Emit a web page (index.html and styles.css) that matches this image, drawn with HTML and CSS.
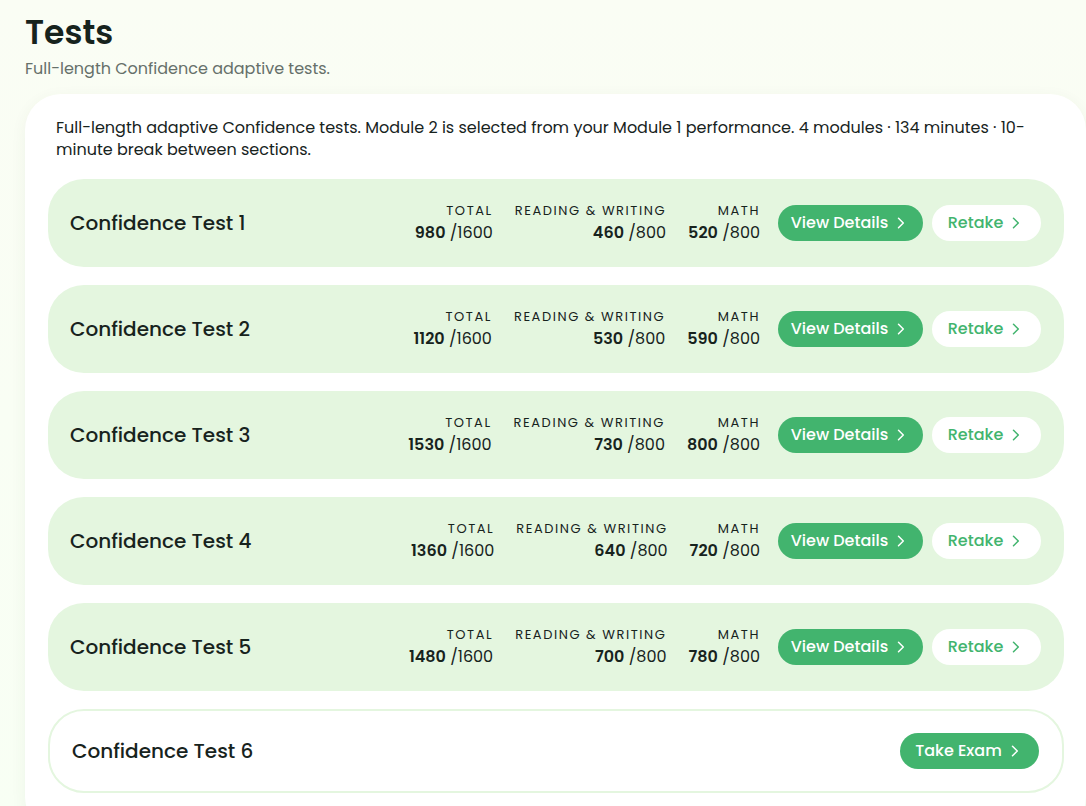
FILE: index.html
```html
<!DOCTYPE html>
<html lang="en">
<head>
<meta charset="utf-8">
<meta name="viewport" content="width=device-width, initial-scale=1">
<title>Tests</title>
<link rel="stylesheet" href="styles.css">
</head>
<body>
<svg class="sprite" aria-hidden="true"><symbol id="chevron" viewBox="0 0 8 12"><path d="M1.5 1.2 6.3 6 1.5 10.8" fill="none" stroke="currentColor" stroke-width="1.5" stroke-linecap="round" stroke-linejoin="round"/></symbol></svg>
<main class="page">
  <header class="page-header">
    <h1 class="page-title">Tests</h1>
    <p class="page-subtitle">Full-length Confidence adaptive tests.</p>
  </header>
  <section class="panel">
    <p class="intro">Full-length adaptive Confidence tests. Module 2 is selected from your Module 1 performance. 4 modules · 134 minutes · 10-minute break between sections.</p>
    <ul class="tests">
      <li class="test">
        <h2 class="test-name">Confidence Test 1</h2>
        <dl class="scores">
          <div class="score"><dt>Total</dt><dd><strong>980</strong> /1600</dd></div>
          <div class="score"><dt>Reading &amp; Writing</dt><dd><strong>460</strong> /800</dd></div>
          <div class="score"><dt>Math</dt><dd><strong>520</strong> /800</dd></div>
        </dl>
        <div class="actions">
          <button class="btn btn-details" type="button">View Details<svg class="chevron"><use href="#chevron"/></svg></button>
          <button class="btn btn-retake" type="button">Retake<svg class="chevron"><use href="#chevron"/></svg></button>
        </div>
      </li>
      <li class="test">
        <h2 class="test-name">Confidence Test 2</h2>
        <dl class="scores">
          <div class="score"><dt>Total</dt><dd><strong>1120</strong> /1600</dd></div>
          <div class="score"><dt>Reading &amp; Writing</dt><dd><strong>530</strong> /800</dd></div>
          <div class="score"><dt>Math</dt><dd><strong>590</strong> /800</dd></div>
        </dl>
        <div class="actions">
          <button class="btn btn-details" type="button">View Details<svg class="chevron"><use href="#chevron"/></svg></button>
          <button class="btn btn-retake" type="button">Retake<svg class="chevron"><use href="#chevron"/></svg></button>
        </div>
      </li>
      <li class="test">
        <h2 class="test-name">Confidence Test 3</h2>
        <dl class="scores">
          <div class="score"><dt>Total</dt><dd><strong>1530</strong> /1600</dd></div>
          <div class="score"><dt>Reading &amp; Writing</dt><dd><strong>730</strong> /800</dd></div>
          <div class="score"><dt>Math</dt><dd><strong>800</strong> /800</dd></div>
        </dl>
        <div class="actions">
          <button class="btn btn-details" type="button">View Details<svg class="chevron"><use href="#chevron"/></svg></button>
          <button class="btn btn-retake" type="button">Retake<svg class="chevron"><use href="#chevron"/></svg></button>
        </div>
      </li>
      <li class="test">
        <h2 class="test-name">Confidence Test 4</h2>
        <dl class="scores">
          <div class="score"><dt>Total</dt><dd><strong>1360</strong> /1600</dd></div>
          <div class="score"><dt>Reading &amp; Writing</dt><dd><strong>640</strong> /800</dd></div>
          <div class="score"><dt>Math</dt><dd><strong>720</strong> /800</dd></div>
        </dl>
        <div class="actions">
          <button class="btn btn-details" type="button">View Details<svg class="chevron"><use href="#chevron"/></svg></button>
          <button class="btn btn-retake" type="button">Retake<svg class="chevron"><use href="#chevron"/></svg></button>
        </div>
      </li>
      <li class="test">
        <h2 class="test-name">Confidence Test 5</h2>
        <dl class="scores">
          <div class="score"><dt>Total</dt><dd><strong>1480</strong> /1600</dd></div>
          <div class="score"><dt>Reading &amp; Writing</dt><dd><strong>700</strong> /800</dd></div>
          <div class="score"><dt>Math</dt><dd><strong>780</strong> /800</dd></div>
        </dl>
        <div class="actions">
          <button class="btn btn-details" type="button">View Details<svg class="chevron"><use href="#chevron"/></svg></button>
          <button class="btn btn-retake" type="button">Retake<svg class="chevron"><use href="#chevron"/></svg></button>
        </div>
      </li>
      <li class="test test-new">
        <h2 class="test-name">Confidence Test 6</h2>
        <div class="actions">
          <button class="btn btn-take" type="button">Take Exam<svg class="chevron"><use href="#chevron"/></svg></button>
        </div>
      </li>
    </ul>
  </section>
</main>
</body>
</html>
```
FILE: styles.css
```css
* { box-sizing: border-box; }

body {
  margin: 0;
  min-height: 100vh;
  background: linear-gradient(to bottom, #fafdf4, #f8fff4);
  color: #17231d;
  font-family: Poppins, Inter, sans-serif;
  font-size: 16px;
  line-height: 22px;
}

h1, h2, p, ul, dl, dd { margin: 0; padding: 0; }

.sprite { position: absolute; width: 0; height: 0; }

.page { padding: 11px 0 0 25px; }

.page-title { font-size: 33px; line-height: 44px; font-weight: 600; }

.page-subtitle { margin-top: 3px; color: #66706a; }

.panel {
  margin-top: 14px;
  padding: 23px 22px 40px 23px;
  border-radius: 36px;
  background: #fff;
  box-shadow: 0 4px 16px rgba(60, 90, 50, 0.06);
}

.intro { padding: 0 8px; }

.tests {
  display: grid;
  gap: 18px;
  margin-top: 18px;
  list-style: none;
}

.test {
  display: flex;
  align-items: center;
  padding: 22px 23px 22px 22px;
  border-radius: 36px;
  background: #e4f6df;
}

.test-new { border: 2px solid #e4f6df; background: #fff; }

.test-name {
  flex: 1;
  font-size: 20px;
  line-height: 28px;
  font-weight: 500;
}

.scores { display: flex; gap: 22px; text-align: right; white-space: nowrap; }

.score dt {
  font-size: 13px;
  line-height: 20px;
  letter-spacing: 0.12em;
  text-transform: uppercase;
}

.score dd { line-height: 24px; }

.score strong { font-weight: 600; }

.actions { display: flex; gap: 9px; margin-left: 18px; }

.btn {
  display: flex;
  align-items: center;
  justify-content: center;
  gap: 9px;
  height: 36px;
  padding: 0 5px 0 0;
  border: 0;
  border-radius: 18px;
  background: #42b46e;
  color: #fff;
  font: inherit;
  font-weight: 500;
  white-space: nowrap;
  cursor: pointer;
}

.chevron { width: 8px; height: 12px; }

.btn-details { min-width: 145px; }
.btn-retake { min-width: 109px; background: #fff; color: #42b46e; }
.btn-take { min-width: 139px; }
```
